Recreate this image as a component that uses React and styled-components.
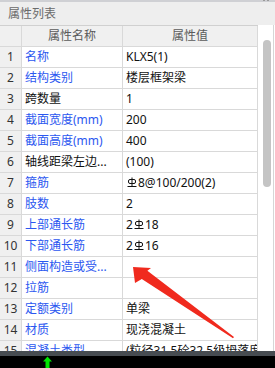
import React from 'react';
import styled, { createGlobalStyle } from 'styled-components';

const Global = createGlobalStyle`
  html, body { margin: 0; padding: 0; background: #fff; }
  body { font-family: "Noto Sans", "Noto Sans CJK SC", sans-serif; }
`;

const Page = styled.div`
  position: relative;
  width: 275px;
  height: 368px;
  overflow: hidden;
  display: flex;
  flex-direction: column;
  background: #fff;
  font-size: 12px;
`;

const TitleBar = styled.div`
  position: relative;
  flex: 0 0 25px;
  box-sizing: border-box;
  border-top: 2px solid #cfd0d4;
  background: #eeeeee;
  display: flex;
  align-items: center;
  padding: 1px 0 0 8px;
  color: #6a6a6a;
  line-height: 20px;
`;

const Grip = styled.div`
  position: absolute;
  top: -2px;
  right: 6px;
  display: flex;
  gap: 2px;
  & > span {
    width: 2px;
    height: 1px;
    background: #9a9a9a;
  }
`;

const Body = styled.div`
  flex: 1 1 auto;
  min-height: 0;
  display: flex;
`;

const Table = styled.div`
  width: 258px;
  display: flex;
  flex-direction: column;
  overflow: hidden;
`;

const Row = styled.div`
  flex: 0 0 auto;
  display: grid;
  grid-template-columns: 22px 101px 135px;
  height: 21px;
  box-sizing: border-box;
  border-bottom: 1px solid #d9d9d9;
`;

const HeaderRow = styled(Row)`
  height: 22px;
  border-top: 1px solid #d0d0d0;
  background: #f0f0f0;
`;

const Cell = styled.div`
  box-sizing: border-box;
  border-right: 1px solid #d9d9d9;
  padding: 0 3px;
  line-height: 20px;
  white-space: nowrap;
  overflow: hidden;
  color: ${p => (p.$blue ? '#2b57f0' : '#111')};
`;

const NumCell = styled(Cell)`
  background: #f0f0f0;
  text-align: center;
  padding: 0;
  color: #333;
`;

const HeadCell = styled(Cell)`
  text-align: center;
  color: #5a5a5a;
`;

const ScrollArea = styled.div`
  width: 17px;
  display: flex;
`;

const Track = styled.div`
  width: 16px;
  box-sizing: border-box;
  border-right: 1px solid #d6d6d6;
  padding: 15px 0 0 5px;
`;

const Thumb = styled.div`
  width: 8px;
  height: 147px;
  border-radius: 4px;
  background: #c4c4c4;
`;

const BottomBar = styled.div`
  flex: 0 0 17px;
  box-sizing: border-box;
  border-top: 5px solid #474c51;
  background: #000;
  display: flex;
  align-items: flex-end;
  padding-left: 43px;
`;

const RebarSvg = styled.svg`
  display: inline-block;
  vertical-align: -1px;
  margin: 0 1px 0 1px;
`;

const Overlay = styled.svg`
  position: absolute;
  left: 0;
  top: 0;
  pointer-events: none;
`;

const Rebar = () => (
  <RebarSvg viewBox="0 0 10 11" width="10" height="11">
    <path d="M5 0.5V9.5M0.5 9.5H9.5" stroke="#111" strokeWidth="1" fill="none" />
    <rect x="1.5" y="2.5" width="7" height="4" rx="1.5" stroke="#111" strokeWidth="1" fill="none" />
  </RebarSvg>
);

const rows = [
  ['名称', true, 'KLX5(1)'],
  ['结构类别', true, '楼层框架梁'],
  ['跨数量', false, '1'],
  ['截面宽度(mm)', true, '200'],
  ['截面高度(mm)', true, '400'],
  ['轴线距梁左边...', false, '(100)'],
  ['箍筋', true, <><Rebar />8@100/200(2)</>],
  ['肢数', true, '2'],
  ['上部通长筋', true, <>2<Rebar />18</>],
  ['下部通长筋', true, <>2<Rebar />16</>],
  ['侧面构造或受...', true, ''],
  ['拉筋', true, ''],
  ['定额类别', true, '单梁'],
  ['材质', true, '现浇混凝土'],
  ['混凝土类型', true, '(粒径31.5砼32.5级坍落度35~50)'],
];

export default function App() {
  return (
    <>
      <Global />
      <Page>
        <TitleBar>
          属性列表
          <Grip><span /><span /></Grip>
        </TitleBar>
        <Body>
          <Table>
            <HeaderRow>
              <NumCell />
              <HeadCell>属性名称</HeadCell>
              <HeadCell>属性值</HeadCell>
            </HeaderRow>
            {rows.map(([name, blue, value], i) => (
              <Row key={i}>
                <NumCell>{i + 1}</NumCell>
                <Cell $blue={blue}>{name}</Cell>
                <Cell>{value}</Cell>
              </Row>
            ))}
          </Table>
          <ScrollArea>
            <Track>
              <Thumb />
            </Track>
          </ScrollArea>
        </Body>
        <BottomBar>
          <svg width="10" height="12" viewBox="0 0 10 12">
            <path d="M4.5 0.5L9 5.5H6.5V12H2.5V5.5H0Z" fill="#00e600" />
          </svg>
        </BottomBar>
        <Overlay width="275" height="368" viewBox="0 0 275 368">
          <polygon
            points="133,267 151,268 147.4,270.8 234,337 233,338.2 141.8,279 135,283"
            fill="#f02a1e"
          />
        </Overlay>
      </Page>
    </>
  );
}
